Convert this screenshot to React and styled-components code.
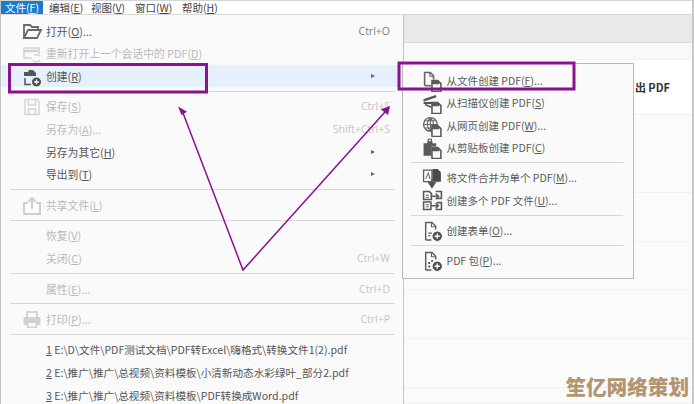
import React from 'react';
import styled, { createGlobalStyle } from 'styled-components';

const GlobalStyle = createGlobalStyle`
  html, body { margin: 0; padding: 0; background: #fff; }
  body { font-family: "Noto Sans CJK SC", "Noto Sans", sans-serif; }
`;

const Page = styled.div`
  position: relative;
  width: 694px;
  height: 404px;
  overflow: hidden;
  box-sizing: border-box;
  border-right: 2px solid #c8c8c8;
  border-left: 1px solid #c4c4c4;
  background: #fafafa;
  color: #555;
  font-size: 10.8px;
`;

const MenuBar = styled.div`
  display: flex;
  height: 15px;
  box-sizing: border-box;
  background: #fff;
  border-top: 1px solid #d4d4d4;
  border-bottom: 1px solid #d6d6d6;
  font-size: 10.5px;
  line-height: 13px;
`;

const BarItem = styled.div`
  width: ${p => p.$w}px;
  margin-right: ${p => p.$gap || 0}px;
  text-align: center;
  white-space: nowrap;
  color: ${p => (p.$active ? '#fff' : '#444')};
  background: ${p => (p.$active ? '#1b7bcb' : 'transparent')};
`;

const Body = styled.div`
  display: flex;
  height: 389px;
`;

const FileMenu = styled.div`
  width: 403px;
  flex: none;
  box-sizing: border-box;
  padding-top: 4.4px;
  background: #fafafa;
  border-right: 1px solid #c4c4c4;
`;

const Row = styled.div`
  display: flex;
  align-items: center;
  height: 22.6px;
  padding-left: 45px;
  padding-right: 13px;
  position: relative;
  white-space: nowrap;
  color: ${p => (p.$off ? '#b9b9b9' : '#555')};
  background: ${p => (p.$hover ? '#e5f0fa' : 'transparent')};
`;

const RowIcon = styled.span`
  position: absolute;
  left: 21px;
  top: 2px;
  width: 20px;
  height: 20px;
  display: block;
`;

const Label = styled.span`
  flex: 1;
`;

const RecentLabel = styled.span`
  flex: 1;
  font-size: 10.6px;
`;

const Shortcut = styled.span`
  color: ${p => (p.$dark ? '#808080' : '#c4c4c4')};
  font-family: "Open Sans", "Liberation Sans", sans-serif;
  font-size: 10.5px;
`;

const Caret = styled.span`
  width: 0;
  height: 0;
  margin-right: 15px;
  border-left: 4px solid #666;
  border-top: 2.5px solid transparent;
  border-bottom: 2.5px solid transparent;
`;

const Sep = styled.div`
  height: 8px;
  margin: 0 ${p => p.$right || 8}px 0 ${p => p.$left || 9}px;
  display: flex;
  align-items: center;
  &::after {
    content: '';
    flex: 1;
    height: 1px;
    background: #d8d8d8;
  }
`;

const Backdrop = styled.div`
  flex: 1;
  display: flex;
  flex-direction: column;
`;

const Band = styled.div`
  height: ${p => p.$h}px;
  flex: none;
  box-sizing: border-box;
  display: flex;
  align-items: center;
  justify-content: flex-end;
  padding-right: 22px;
  background: ${p => p.$bg || '#fbfbfb'};
  border-bottom: 1px solid ${p => p.$line || '#f1f1f1'};
  font-weight: 700;
  font-size: 11px;
  color: #333;
`;

const SubMenu = styled.div`
  position: absolute;
  left: 401px;
  top: 63px;
  width: 232px;
  height: 216px;
  box-sizing: border-box;
  padding-top: 5.5px;
  background: #fafafa;
  border: 1px solid #b9b9b9;
`;

const SubRow = styled.div`
  display: flex;
  align-items: center;
  height: 22.3px;
  padding-left: 43.5px;
  position: relative;
  white-space: nowrap;
  color: #5a5a5a;
  font-size: 10.5px;
`;

const SubIcon = styled.span`
  position: absolute;
  left: 19px;
  top: 1.5px;
  width: 21px;
  height: 21px;
  display: block;
`;

const Overlay = styled.svg`
  position: absolute;
  left: -1px;
  top: 0;
  width: 694px;
  height: 404px;
  pointer-events: none;
`;

const Watermark = styled.div`
  position: absolute;
  right: 3px;
  bottom: 7px;
  color: #b29672;
  font-size: 20.6px;
  font-weight: 900;
  line-height: 22px;
`;

const Svg = ({ color = '#555', children }) => (
  <svg width="100%" height="100%" viewBox="0 0 20 20" fill="none" stroke={color} strokeWidth="1.5">
    {children}
  </svg>
);

const FolderIcon = () => (
  <Svg color="#6a6a6a">
    <path d="M2 17V4h6l2 2h6v3" strokeWidth="1.8" />
    <path d="M2 17l4-8h13l-4 8z" strokeWidth="1.8" />
  </Svg>
);

const ReopenIcon = () => (
  <Svg color="#d2d2d2">
    <path d="M2 4h15v6M2 4v10h8" />
    <path d="M2 7h15" strokeWidth="2.5" />
    <path d="M11 16a4 4 0 0 0 7 0M18 12a4 4 0 0 0-6 0" />
  </Svg>
);

const PlusBadge = ({ color = '#5f5f5f', cx = 14.5, cy = 15 }) => (
  <g>
    <circle cx={cx} cy={cy} r="5" fill={color} stroke="#fafafa" strokeWidth="1" />
    <path d={`M${cx - 2.5} ${cy}h5M${cx} ${cy - 2.5}v5`} stroke="#fff" strokeWidth="1.3" />
  </g>
);

const CreateIcon = () => (
  <Svg>
    <path d="M2 9V5h4l1-2h4l3 3v3z" fill="#555" stroke="none" />
    <path d="M3 11v6.5h6" />
    <PlusBadge color="#4d4d4d" />
  </Svg>
);

const SaveIcon = () => (
  <Svg color="#d6d6d6">
    <path d="M3 2.5h12l2 2v13H3z" />
    <path d="M6.5 3v5h7V3M6.5 17v-5h7v5" />
  </Svg>
);

const ShareIcon = () => (
  <Svg color="#cfcfcf">
    <path d="M6 7H2v11h16V7h-4" strokeWidth="2" />
    <path d="M10 13V2M6.5 5.5L10 2l3.5 3.5" strokeWidth="2" />
  </Svg>
);

const PrintIcon = () => (
  <Svg color="#d2d2d2">
    <path d="M5 7V2h10v5" strokeWidth="2" />
    <path d="M3 7h14a1.5 1.5 0 0 1 1.5 1.5V15H15v3H5v-3H1.5V8.5A1.5 1.5 0 0 1 3 7z" fill="#d2d2d2" stroke="none" />
    <path d="M6.5 13h7v3.5h-7z" fill="#fafafa" stroke="none" />
  </Svg>
);

// the little PDF sheet that sits at the bottom right of most submenu icons
const SmallPdf = () => (
  <g>
    <path d="M9.5 9h5.500l3 3v7.500H9.500z" fill="#fafafa" stroke="#5a5a5a" strokeWidth="1.500" />
    <path d="M9.500 9h5.500l1.500 1.500v2h-7z" fill="#5a5a5a" stroke="none" />
  </g>
);

const FromFileIcon = () => (
  <Svg color="#666">
    <path d="M2.500 14V1.500H8l3 3V8" />
    <path d="M2.500 14h6" />
    <path d="M7.500 2v3h3.500" strokeWidth="1" />
    <SmallPdf />
  </Svg>
);

const ScanIcon = () => (
  <Svg>
    <path d="M1.500 7l12-4" strokeWidth="2.200" />
    <path d="M1.500 9.500H11" strokeWidth="2" />
    <path d="M3 11l6 2.500" />
    <SmallPdf />
  </Svg>
);

const GlobeIcon = () => (
  <Svg color="#666">
    <circle cx="8" cy="8" r="6.500" strokeWidth="1.300" />
    <path d="M1.500 8h13M8 1.500v13M3 4.500h10M3 11.500h10M8 1.500c-4 4-4 9 0 13M8 1.500c4 4 4 9 0 13" strokeWidth="1" />
    <SmallPdf />
  </Svg>
);

const ClipboardIcon = () => (
  <Svg>
    <path d="M1.500 5H5V3h5v2h3.500v3H9v9H1.500z" fill="#5a5a5a" stroke="none" />
    <path d="M6 1.200h3v2.500H6z" fill="#fafafa" strokeWidth="1" />
    <SmallPdf />
  </Svg>
);

const CombineIcon = () => (
  <Svg color="#5a5a5a">
    <path d="M1.500 13V2h8v11z" strokeWidth="1.200" />
    <path d="M10 1h5l3 3v9h-8z" fill="#4a4a4a" stroke="none" />
    <path d="M3.500 10.500l2.500-6 1.500 6" strokeWidth="0.900" />
    <path d="M9.500 10v4.500M6.500 14h6l-3 4.500z" fill="#4a4a4a" strokeWidth="1.400" />
  </Svg>
);

const BatchIcon = () => (
  <Svg color="#5a5a5a">
    <path d="M1.500 9V1.500H7l2 2V9zM1.500 18.500v-7h7v7zM13 1.500h5.500V8H14M13 18.500h5.500V12H14" strokeWidth="1.500" />
    <path d="M8 6h7.500M13 3.300L15.800 6 13 8.700M8.500 15h7M13 12.500l2.700 2.500-2.700 2.500" strokeWidth="1.300" />
    <path d="M3.500 14h3M3.500 16h3M3.500 5h3M3.500 7h3" strokeWidth="0.900" />
  </Svg>
);

const FormIcon = () => (
  <Svg color="#5f5f5f">
    <path d="M3.500 18V1.500H9.500l3.500 3.500V8M3.500 18H9" strokeWidth="1.400" />
    <path d="M9 2v3.500h3.500" strokeWidth="1" />
    <path d="M6 11.500h3.500M6 14h2" strokeWidth="1.100" />
    <PlusBadge cx={14.5} cy={14.5} color="#4f4f4f" />
  </Svg>
);

const PackageIcon = () => (
  <Svg color="#5f5f5f">
    <path d="M3.500 18V1.500H9.500l3.500 3.500V8M3.500 18H9" strokeWidth="1.400" />
    <path d="M9 2v3.500h3.500" strokeWidth="1" />
    <path d="M6 10.500h1.800v1.800H6zM8.800 8.500h1.800v1.800H8.800zM6 13.800h1.800v1.800H6z" fill="#555" stroke="none" />
    <PlusBadge cx={14.5} cy={14.5} color="#4f4f4f" />
  </Svg>
);

const Key = ({ children }) => <u>{children}</u>;

const barItems = [
  ['文件', 'F', 42, 6, true],
  ['编辑', 'E', 32, 10],
  ['视图', 'V', 33, 11],
  ['窗口', 'W', 36, 11],
  ['帮助', 'H', 33, 0],
];

const bands = [
  { h: 28, bg: '#e9e9e9', line: '#dcdcdc' },
  { h: 17, bg: '#f9f9f9', line: '#f1f1f1' },
  { h: 55, bg: '#fff', text: '出 PDF' },
  { h: 78 },
  { h: 49 },
  { h: 48 },
  { h: 49 },
  { h: 49 },
  { h: 16 },
];

const App = () => {
  return (
    <Page>
      <GlobalStyle />
      <MenuBar>
        {barItems.map(([name, key, w, gap, active]) => (
          <BarItem key={key} $w={w} $gap={gap} $active={active}>
            {name}(<Key>{key}</Key>)
          </BarItem>
        ))}
      </MenuBar>
      <Body>
        <FileMenu>
          <Row><RowIcon><FolderIcon /></RowIcon><Label>打开(<Key>O</Key>)...</Label><Shortcut $dark>Ctrl+O</Shortcut></Row>
          <Row $off><RowIcon><ReopenIcon /></RowIcon><Label>重新打开上一个会话中的 PDF(<Key>D</Key>)</Label></Row>
          <Row $hover><RowIcon><CreateIcon /></RowIcon><Label>创建(<Key>R</Key>)</Label><Caret /></Row>
          <Sep />
          <Row $off><RowIcon><SaveIcon /></RowIcon><Label>保存(<Key>S</Key>)</Label><Shortcut>Ctrl+S</Shortcut></Row>
          <Row $off><Label>另存为(<Key>A</Key>)...</Label><Shortcut>Shift+Ctrl+S</Shortcut></Row>
          <Row><Label>另存为其它(<Key>H</Key>)</Label><Caret /></Row>
          <Row><Label>导出到(<Key>T</Key>)</Label><Caret /></Row>
          <Sep />
          <Row $off><RowIcon><ShareIcon /></RowIcon><Label>共享文件(<Key>L</Key>)</Label></Row>
          <Sep />
          <Row $off><Label>恢复(<Key>V</Key>)</Label></Row>
          <Row $off><Label>关闭(<Key>C</Key>)</Label><Shortcut>Ctrl+W</Shortcut></Row>
          <Sep />
          <Row $off><Label>属性(<Key>E</Key>)...</Label><Shortcut>Ctrl+D</Shortcut></Row>
          <Sep />
          <Row $off><RowIcon><PrintIcon /></RowIcon><Label>打印(<Key>P</Key>)...</Label><Shortcut>Ctrl+P</Shortcut></Row>
          <Sep />
          <Row><RecentLabel><Key>1</Key> E:\D\文件\PDF测试文档\PDF转Excel\嗨格式\转换文件1(2).pdf</RecentLabel></Row>
          <Row><RecentLabel><Key>2</Key> E:\推广\推广\总视频\资料模板\小清新动态水彩绿叶_部分2.pdf</RecentLabel></Row>
          <Row><RecentLabel><Key>3</Key> E:\推广\推广\总视频\资料模板\PDF转换成Word.pdf</RecentLabel></Row>
        </FileMenu>
        <Backdrop>
          {bands.map((b, i) => (
            <Band key={i} $h={b.h} $bg={b.bg} $line={b.line}>{b.text}</Band>
          ))}
        </Backdrop>
      </Body>

      <SubMenu>
        <SubRow><SubIcon><FromFileIcon /></SubIcon>从文件创建 PDF(<Key>F</Key>)...</SubRow>
        <SubRow><SubIcon><ScanIcon /></SubIcon>从扫描仪创建 PDF(<Key>S</Key>)</SubRow>
        <SubRow><SubIcon><GlobeIcon /></SubIcon>从网页创建 PDF(<Key>W</Key>)...</SubRow>
        <SubRow><SubIcon><ClipboardIcon /></SubIcon>从剪贴板创建 PDF(<Key>C</Key>)</SubRow>
        <Sep $left={8} $right={10} />
        <SubRow><SubIcon><CombineIcon /></SubIcon>将文件合并为单个 PDF(<Key>M</Key>)...</SubRow>
        <SubRow><SubIcon><BatchIcon /></SubIcon>创建多个 PDF 文件(<Key>U</Key>)...</SubRow>
        <Sep $left={8} $right={10} />
        <SubRow><SubIcon><FormIcon /></SubIcon>创建表单(<Key>O</Key>)...</SubRow>
        <Sep $left={8} $right={10} />
        <SubRow><SubIcon><PackageIcon /></SubIcon>PDF 包(<Key>P</Key>)...</SubRow>
      </SubMenu>

      <Overlay viewBox="0 0 694 404">
        <rect x="9.5" y="64.5" width="197" height="27.5" fill="none" stroke="#8a1190" strokeWidth="3" />
        <rect x="399" y="63" width="175" height="26" fill="none" stroke="#8a1190" strokeWidth="3" />
        <path d="M183 113L243 270L385 112" fill="none" stroke="#8a1190" strokeWidth="1.5" />
        <path d="M178 106.500L187 111.700L181.500 115z" fill="#8a1190" />
        <path d="M390 106L388 115L380.700 109.300z" fill="#8a1190" />
      </Overlay>

      <Watermark>笙亿网络策划</Watermark>
    </Page>
  );
};

export default App;
